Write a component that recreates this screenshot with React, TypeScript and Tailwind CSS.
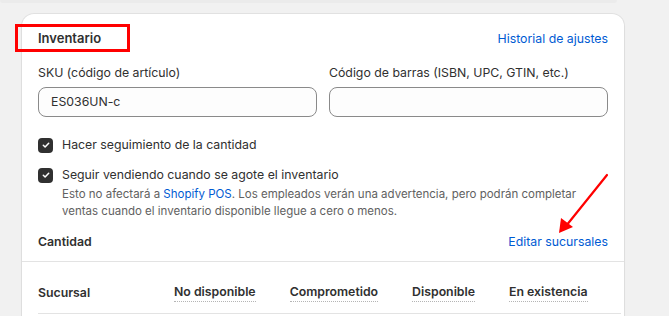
import React from 'react';

function Check() {
  return (
    <span className="flex h-[15px] w-[15px] shrink-0 items-center justify-center rounded-[4px] bg-[#303030]">
      <svg width="10" height="10" viewBox="0 0 10 10" fill="none">
        <path d="M2.3 5.2l1.8 1.8 3.6-3.8" stroke="white" strokeWidth="1.5" strokeLinecap="round" strokeLinejoin="round" />
      </svg>
    </span>
  );
}

const columns = ['No disponible', 'Comprometido', 'Disponible', 'En existencia'];

export default function App() {
  return (
    <div
      className="relative h-[316px] w-[669px] overflow-hidden bg-[#f1f1f1] text-[12.3px] text-[#303030]"
      style={{ fontFamily: 'Inter, "Noto Sans", sans-serif' }}
    >
      {/* bottom of the previous card */}
      <div className="h-[3px] w-[617px] rounded-b-[12px] bg-[#ebebeb]" />

      <div className="ml-[22px] mt-[11px] h-[400px] w-[602px] rounded-[12px] bg-white pt-[15px] shadow-[0_0_0_1px_rgba(0,0,0,0.06),0_1px_2px_rgba(0,0,0,0.08)]">
        <div className="px-4">
          {/* Header */}
          <div className="flex h-5 items-center justify-between">
            <h2 className="text-[13px] font-semibold">Inventario</h2>
            <a className="text-[#005bd3]">Historial de ajustes</a>
          </div>

          {/* Fields */}
          <div className="mt-[14px] grid grid-cols-2 gap-x-3">
            <div>
              <label className="block h-5 leading-5">SKU (código de artículo)</label>
              <div className="mt-1 flex h-[30px] items-center rounded-[8px] border border-[#8a8a8a] bg-[#fdfdfd] px-3">
                ES036UN-c
              </div>
            </div>
            <div>
              <label className="block h-5 leading-5">Código de barras (ISBN, UPC, GTIN, etc.)</label>
              <div className="mt-1 h-[30px] rounded-[8px] border border-[#8a8a8a] bg-[#fdfdfd]" />
            </div>
          </div>

          {/* Checkboxes */}
          <div className="mt-[18px] flex h-5 items-center gap-[9px]">
            <Check />
            <span>Hacer seguimiento de la cantidad</span>
          </div>
          <div className="mt-[10px] flex h-5 items-center gap-[9px]">
            <Check />
            <span>Seguir vendiendo cuando se agote el inventario</span>
          </div>
          <p className="ml-6 mt-[1px] pr-[24px] text-[11.5px] leading-[17px] text-[#616161]">
            Esto no afectará a <span className="text-[#005bd3]">Shopify POS</span>. Los empleados verán una advertencia, pero podrán completar ventas cuando el inventario disponible llegue a cero o menos.
          </p>

          {/* Quantity */}
          <div className="mt-[12px] flex h-5 items-center justify-between">
            <h3 className="font-semibold">Cantidad</h3>
            <a className="text-[#005bd3]">Editar sucursales</a>
          </div>
        </div>

        <div className="mt-[9px] border-t border-[#e3e3e3]" />

        {/* Table header */}
        <div className="ml-4 mr-[3px] flex h-[52px] items-center border-b border-[#e3e3e3] pt-[10px] font-semibold">
          <span className="w-[136px] pt-[2px]">Sucursal</span>
          <div className="flex gap-[34px]">
            {columns.map((c) => (
              <span key={c} className="border-b border-dotted border-[#b5b5b5] leading-[18px]">
                {c}
              </span>
            ))}
          </div>
        </div>
      </div>

      {/* Annotation: red box */}
      <div className="absolute left-[15px] top-[24px] h-[28px] w-[115px] border-[3px] border-[#f00]" />

      {/* Annotation: red arrow */}
      <svg className="absolute left-0 top-0" width="669" height="316" viewBox="0 0 669 316">
        <line x1="607" y1="175" x2="566" y2="226" stroke="#f00" strokeWidth="2.2" strokeLinecap="round" />
        <polygon points="559,233 561,218 573,227" fill="#f00" />
      </svg>
    </div>
  );
}
